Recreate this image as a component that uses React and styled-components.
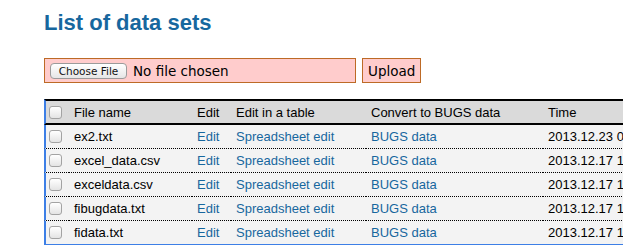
import React from "react";
import styled, { createGlobalStyle } from "styled-components";

const GlobalStyle = createGlobalStyle`
  html, body {
    margin: 0;
    padding: 0;
    background: #fff;
    overflow: hidden;
  }
  body {
    font-family: "Liberation Sans", Arial, sans-serif;
    color: #000;
  }
`;

const Page = styled.div`
  padding: 0 0 0 44px;
  width: 760px;
`;

const Title = styled.h1`
  margin: 10px 0 0;
  font-family: "Liberation Sans", Arial, sans-serif;
  font-size: 22px;
  line-height: 26px;
  font-weight: bold;
  color: #17679e;
`;

const UploadForm = styled.form`
  display: flex;
  align-items: stretch;
  gap: 6px;
  margin-top: 22px;
  height: 25px;
  font-family: "DejaVu Sans", "Lucida Grande", sans-serif;
`;

const FileBox = styled.label`
  box-sizing: border-box;
  width: 312px;
  display: flex;
  align-items: center;
  gap: 6px;
  padding: 0 5px;
  border: 1px solid #bd6a26;
  background: #ffcccc;
  font-size: 13.5px;
`;

const ChooseButton = styled.span`
  box-sizing: border-box;
  height: 16px;
  width: 77px;
  display: flex;
  align-items: center;
  justify-content: center;
  border: 1px solid #9b9b9b;
  border-radius: 4px;
  background: linear-gradient(#ffffff, #e6e6e6);
  font-size: 10.5px;
  color: #111;
`;

const UploadButton = styled.button`
  box-sizing: border-box;
  padding: 0 5px;
  border: 1px solid #bd6a26;
  background: #ffcccc;
  font-family: "DejaVu Sans", "Lucida Grande", sans-serif;
  font-size: 13.5px;
  color: #000;
`;

const Table = styled.table`
  margin-top: 16px;
  width: 720px;
  border-collapse: separate;
  border-spacing: 0;
  table-layout: fixed;
  font-size: 13px;
  background: #f3f3f3;
`;

const Head = styled.th`
  height: 22px;
  padding: 0 0 0 5px;
  text-align: left;
  font-weight: normal;
  vertical-align: middle;
  background: #dadada;
  border-top: 2px solid #000;
  border-bottom: 2px solid #000;
  white-space: nowrap;
  &:first-child {
    border-left: 2px solid #3d7fe6;
    padding-left: 3px;
  }
`;

const Cell = styled.td`
  height: 23px;
  padding: 0 0 0 5px;
  vertical-align: middle;
  border-bottom: 1px dotted #000;
  white-space: nowrap;
  overflow: hidden;
  &:first-child {
    border-left: 2px solid #3d7fe6;
    padding-left: 3px;
  }
  tr:last-child > & {
    border-bottom: 1px solid #3d7fe6;
  }
`;

const Check = styled.span`
  display: block;
  box-sizing: border-box;
  width: 13px;
  height: 13px;
  border: 1px solid #a3a3a3;
  border-radius: 3px;
  background: linear-gradient(#ffffff, #e4e4e4);
`;

const DataLink = styled.a`
  color: #17679e;
  text-decoration: none;
`;

const rows = [
  { name: "ex2.txt", time: "2013.12.23 09:14" },
  { name: "excel_data.csv", time: "2013.12.17 16:02" },
  { name: "exceldata.csv", time: "2013.12.17 15:58" },
  { name: "fibugdata.txt", time: "2013.12.17 15:40" },
  { name: "fidata.txt", time: "2013.12.17 15:31" },
];

export default function App() {
  return (
    <Page>
      <GlobalStyle />
      <Title>List of data sets</Title>
      <UploadForm onSubmit={(e) => e.preventDefault()}>
        <FileBox>
          <ChooseButton>Choose File</ChooseButton>
          <span>No file chosen</span>
        </FileBox>
        <UploadButton type="submit">Upload</UploadButton>
      </UploadForm>
      <Table>
        <colgroup>
          <col style={{ width: 25 }} />
          <col style={{ width: 123 }} />
          <col style={{ width: 39 }} />
          <col style={{ width: 135 }} />
          <col style={{ width: 177 }} />
          <col />
        </colgroup>
        <thead>
          <tr>
            <Head><Check /></Head>
            <Head>File name</Head>
            <Head>Edit</Head>
            <Head>Edit in a table</Head>
            <Head>Convert to BUGS data</Head>
            <Head>Time</Head>
          </tr>
        </thead>
        <tbody>
          {rows.map((r) => (
            <tr key={r.name}>
              <Cell><Check /></Cell>
              <Cell>{r.name}</Cell>
              <Cell><DataLink href="#">Edit</DataLink></Cell>
              <Cell><DataLink href="#">Spreadsheet edit</DataLink></Cell>
              <Cell><DataLink href="#">BUGS data</DataLink></Cell>
              <Cell>{r.time}</Cell>
            </tr>
          ))}
        </tbody>
      </Table>
    </Page>
  );
}
